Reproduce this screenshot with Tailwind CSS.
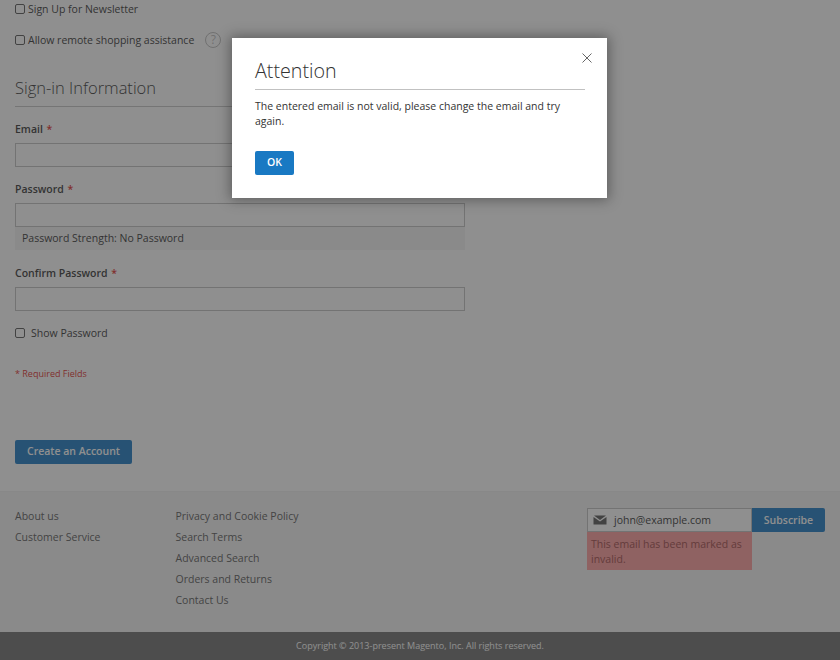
<!DOCTYPE html>
<html lang="en">
<head>
    <meta charset="UTF-8">
    <title>Create New Customer Account</title>
    <script src="https://cdn.jsdelivr.net/npm/@tailwindcss/browser@4"></script>
</head>
<body class="bg-white font-['Open_Sans',sans-serif] text-[#333] text-[10.5px] overflow-hidden">
    <div class="relative h-[660px] w-[840px] overflow-hidden opacity-[.999]">
        <!-- form -->
        <div class="h-[491px] px-[15px]">
            <label class="flex items-center gap-[3px] h-[18px]">
                <span class="w-[10px] h-[10px] border border-[#555] rounded-[2px] bg-white"></span><span class="pt-[1px]">Sign Up for Newsletter</span>
            </label>
            <label class="flex items-center gap-[3px] h-[18px] mt-[13px]">
                <span class="w-[10px] h-[10px] border border-[#555] rounded-[2px] bg-white"></span><span class="pt-[1px]">Allow remote shopping assistance</span>
                <span class="ml-[8px] w-[16px] h-[16px] shrink-0 rounded-full border-[1.5px] border-[#bbb] text-[#bbb] flex items-center justify-center text-[12px]">?</span>
            </label>
            <h2 class="mt-[25px] h-[33px] w-[450px] border-b border-[#c6c6c6] text-[16.5px] font-light leading-[28px] text-[#333]">Sign-in Information</h2>
            <div class="mt-[12px] w-[450px]">
                <div class="h-[18px] leading-[20px] font-semibold">Email <span class="text-[#e02b27] ml-[1px]">*</span></div>
                <div class="mt-[6px] h-[24px] border border-[#c2c2c2] bg-white"></div>
                <div class="mt-[12px] h-[18px] leading-[20px] font-semibold">Password <span class="text-[#e02b27] ml-[1px]">*</span></div>
                <div class="mt-[6px] h-[24px] border border-[#c2c2c2] bg-white"></div>
                <div class="h-[23px] leading-[23px] pl-[7px] bg-[#f4f4f4]">Password Strength: No Password</div>
                <div class="mt-[13px] h-[18px] leading-[20px] font-semibold">Confirm Password <span class="text-[#e02b27] ml-[1px]">*</span></div>
                <div class="mt-[6px] h-[24px] border border-[#c2c2c2] bg-white"></div>
                <label class="flex items-center gap-[6px] h-[18px] mt-[13px]">
                    <span class="w-[10px] h-[10px] border border-[#555] rounded-[2px] bg-white"></span><span class="pt-[1px]">Show Password</span>
                </label>
            </div>
            <div class="mt-[24px] h-[14px] leading-[16px] text-[9px] text-[#e02b27]">* Required Fields</div>
            <button class="mt-[60px] w-[117px] h-[24px] rounded-[2px] bg-[#1979c3] text-white text-[10.5px] font-semibold">Create an Account</button>
        </div>

        <!-- footer -->
        <div class="h-[141px] bg-[#f4f4f4] border-t border-[#f0f0f0] px-[15px] flex">
            <ul class="w-[160.5px] pt-[14px] leading-[21px] text-[#575757]">
                <li>About us</li>
                <li>Customer Service</li>
            </ul>
            <ul class="w-[411.5px] pt-[14px] leading-[21px] text-[#575757]">
                <li>Privacy and Cookie Policy</li>
                <li>Search Terms</li>
                <li>Advanced Search</li>
                <li>Orders and Returns</li>
                <li>Contact Us</li>
            </ul>
            <div class="pt-[16px] flex items-start">
                <div class="w-[165px]">
                    <div class="h-[24px] bg-white border border-[#c2c2c2] flex items-center pl-[5px] gap-[7px] text-[#333]">
                        <svg width="14" height="10" viewBox="0 0 14 10"><path d="M1 0.5h12L7 5z" fill="#555"/><path d="M0.5 2L7 6.5 13.5 2V9.5H0.5z" fill="#555"/></svg>
                        <span class="pt-[2px]">john@example.com</span>
                    </div>
                    <div class="h-[38px] bg-[#ff9b9b] text-[#a04747] px-[4px] pt-[5px] leading-[15px]">This email has been marked as invalid.</div>
                </div>
                <button class="w-[73px] h-[24px] pt-[1px] rounded-r-[2px] bg-[#1979c3] text-white text-[10.5px] font-semibold">Subscribe</button>
            </div>
        </div>
        <div class="h-[28px] bg-[#6e6e6e] text-center text-white text-[9px] leading-[28px]">Copyright © 2013-present Magento, Inc. All rights reserved.</div>

        <!-- overlay + modal -->
        <div class="absolute inset-0 bg-[#333]/55"></div>
        <div class="absolute left-[232px] top-[38px] w-[375px] h-[160px] bg-white shadow-[0_0_12px_2px_rgba(0,0,0,0.35)] pl-[23px] pr-[22px]">
            <svg class="absolute right-[15px] top-[15px]" width="10" height="10" viewBox="0 0 10 10"><path d="M0.5 0.5l9 9M9.5 0.5l-9 9" stroke="#666" stroke-width="1" fill="none"/></svg>
            <h1 class="h-[52px] border-b border-[#c1c1c1] pt-[18px] text-[19.7px] leading-[30px] font-light">Attention</h1>
            <p class="mt-[9px] leading-[15px]">The entered email is not valid, please change the email and try again.</p>
            <button class="mt-[22px] block w-[39px] h-[24px] rounded-[2px] bg-[#1979c3] text-white text-[10.5px] font-semibold">OK</button>
        </div>
    </div>
</body>
</html>
